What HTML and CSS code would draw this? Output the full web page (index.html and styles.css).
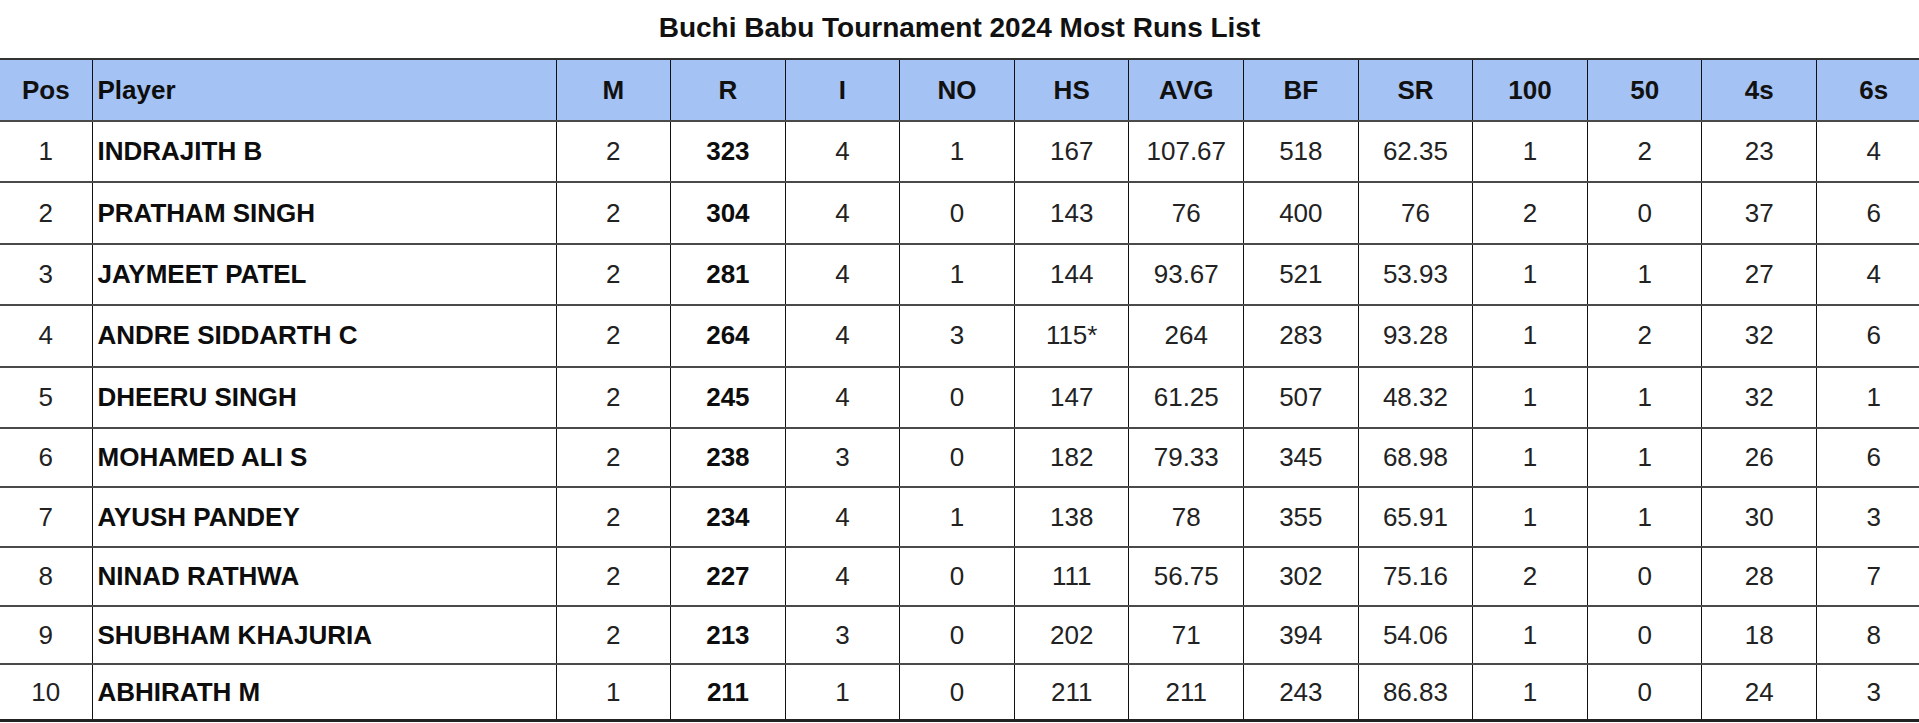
FILE: index.html
```html
<!DOCTYPE html>
<html lang="en">
<head>
<meta charset="utf-8">
<title>Buchi Babu Tournament 2024 Most Runs List</title>
<link rel="stylesheet" href="styles.css">
</head>
<body>
<div class="page">
  <h1 class="title">Buchi Babu Tournament 2024 Most Runs List</h1>
  <table class="runs">
    <colgroup>
      <col class="c-pos"><col class="c-player">
      <col class="c-num"><col class="c-num"><col class="c-num"><col class="c-num">
      <col class="c-num"><col class="c-num"><col class="c-num"><col class="c-num">
      <col class="c-num"><col class="c-num"><col class="c-num"><col class="c-num">
    </colgroup>
    <thead>
      <tr>
        <th>Pos</th><th class="name">Player</th><th>M</th><th>R</th><th>I</th><th>NO</th><th>HS</th><th>AVG</th><th>BF</th><th>SR</th><th>100</th><th>50</th><th>4s</th><th>6s</th>
      </tr>
    </thead>
    <tbody>
      <tr class="tall"><td>1</td><td class="name">INDRAJITH B</td><td>2</td><td class="b">323</td><td>4</td><td>1</td><td>167</td><td>107.67</td><td>518</td><td>62.35</td><td>1</td><td>2</td><td>23</td><td>4</td></tr>
      <tr class="tall"><td>2</td><td class="name">PRATHAM SINGH</td><td>2</td><td class="b">304</td><td>4</td><td>0</td><td>143</td><td>76</td><td>400</td><td>76</td><td>2</td><td>0</td><td>37</td><td>6</td></tr>
      <tr class="tall"><td>3</td><td class="name">JAYMEET PATEL</td><td>2</td><td class="b">281</td><td>4</td><td>1</td><td>144</td><td>93.67</td><td>521</td><td>53.93</td><td>1</td><td>1</td><td>27</td><td>4</td></tr>
      <tr class="tall"><td>4</td><td class="name">ANDRE SIDDARTH C</td><td>2</td><td class="b">264</td><td>4</td><td>3</td><td>115*</td><td>264</td><td>283</td><td>93.28</td><td>1</td><td>2</td><td>32</td><td>6</td></tr>
      <tr class="tall"><td>5</td><td class="name">DHEERU SINGH</td><td>2</td><td class="b">245</td><td>4</td><td>0</td><td>147</td><td>61.25</td><td>507</td><td>48.32</td><td>1</td><td>1</td><td>32</td><td>1</td></tr>
      <tr class="mid"><td>6</td><td class="name">MOHAMED ALI S</td><td>2</td><td class="b">238</td><td>3</td><td>0</td><td>182</td><td>79.33</td><td>345</td><td>68.98</td><td>1</td><td>1</td><td>26</td><td>6</td></tr>
      <tr class="mid"><td>7</td><td class="name">AYUSH PANDEY</td><td>2</td><td class="b">234</td><td>4</td><td>1</td><td>138</td><td>78</td><td>355</td><td>65.91</td><td>1</td><td>1</td><td>30</td><td>3</td></tr>
      <tr class="mid"><td>8</td><td class="name">NINAD RATHWA</td><td>2</td><td class="b">227</td><td>4</td><td>0</td><td>111</td><td>56.75</td><td>302</td><td>75.16</td><td>2</td><td>0</td><td>28</td><td>7</td></tr>
      <tr class="short"><td>9</td><td class="name">SHUBHAM KHAJURIA</td><td>2</td><td class="b">213</td><td>3</td><td>0</td><td>202</td><td>71</td><td>394</td><td>54.06</td><td>1</td><td>0</td><td>18</td><td>8</td></tr>
      <tr class="last"><td>10</td><td class="name">ABHIRATH M</td><td>1</td><td class="b">211</td><td>1</td><td>0</td><td>211</td><td>211</td><td>243</td><td>86.83</td><td>1</td><td>0</td><td>24</td><td>3</td></tr>
    </tbody>
  </table>
</div>
</body>
</html>
```
FILE: styles.css
```css
html, body {
  margin: 0;
  padding: 0;
  background: #ffffff;
  overflow: hidden;
}

.page {
  width: 1919px;
  height: 723px;
  overflow: hidden;
  font-family: "Liberation Sans", Arial, sans-serif;
  color: #1a1a1a;
}

.title {
  margin: 0;
  padding: 13px 0 15px;
  height: 30px;
  line-height: 30px;
  font-size: 28px;
  font-weight: bold;
  text-align: center;
  color: #111;
}

.runs {
  width: 1931px;
  table-layout: fixed;
  border-collapse: collapse;
  font-size: 26px;
}

.c-pos { width: 92px; }
.c-player { width: 464px; }
.c-num { width: 114.6px; }

.runs th,
.runs td {
  padding: 0 5px;
  text-align: center;
  vertical-align: middle;
  border-left: 1px solid #111;
  border-right: 1px solid #111;
  border-top: 2px solid #4a4a4a;
  border-bottom: 2px solid #4a4a4a;
  white-space: nowrap;
  overflow: hidden;
}

.runs th:first-child,
.runs td:first-child {
  border-left: none;
}

.runs thead tr {
  height: 62px;
}

.runs th {
  background: #a4c2f4;
  font-weight: bold;
  color: #111;
  border-top: 2px solid #333;
}

.runs tbody tr.tall { height: 61.4px; }
.runs tbody tr.mid { height: 59.5px; }
.runs tbody tr.short { height: 58px; }
.runs tbody tr.last { height: 56px; }

.runs tbody tr.last td {
  border-bottom: 3px solid #222;
}

.runs .name {
  text-align: left;
  font-weight: bold;
  color: #0d0d0d;
}

.runs td.b {
  font-weight: bold;
  color: #0d0d0d;
}

.runs td {
  color: #222;
}
```
